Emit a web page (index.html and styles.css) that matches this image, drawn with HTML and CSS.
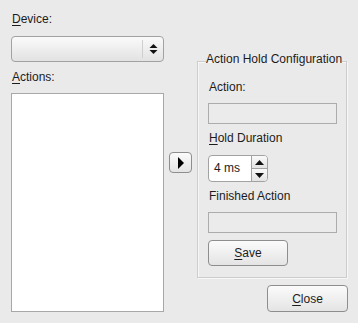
FILE: index.html
```html
<!DOCTYPE html>
<html lang="en">
<head>
    <meta charset="UTF-8">
    <title>Actions</title>
    <link rel="stylesheet" href="styles.css">
</head>
<body>
    <div class="dialog">
        <div class="left">
            <div class="label"><u>D</u>evice:</div>
            <div class="combo">
                <div class="combo-text"></div>
                <div class="combo-arrows">
                    <svg width="9" height="12" viewBox="0 0 9 12"><path d="M4.5 1 L8.5 5 L0.5 5 Z M4.5 11 L8.5 7 L0.5 7 Z" fill="#111"/></svg>
                </div>
            </div>
            <div class="label actions-label"><u>A</u>ctions:</div>
            <div class="list"></div>
        </div>

        <div class="middle">
            <button class="btn arrow-btn">
                <svg width="8" height="12" viewBox="0 0 8 12"><path d="M1 0 L7 6 L1 12 Z" fill="#000"/></svg>
            </button>
        </div>

        <div class="right">
            <fieldset class="group">
                <legend>Action Hold Configuration</legend>
                <div class="label first">Action:</div>
                <div class="entry"></div>
                <div class="label"><u>H</u>old Duration</div>
                <div class="spin">
                    <div class="spin-value">4 ms</div>
                    <div class="spin-buttons">
                        <div class="spin-btn">
                            <svg width="9" height="5" viewBox="0 0 9 5"><path d="M4.5 0 L9 5 L0 5 Z" fill="#111"/></svg>
                        </div>
                        <div class="spin-btn">
                            <svg width="9" height="5" viewBox="0 0 9 5"><path d="M0 0 L9 0 L4.5 5 Z" fill="#111"/></svg>
                        </div>
                    </div>
                </div>
                <div class="label">Finished Action</div>
                <div class="entry"></div>
                <button class="btn save-btn"><u>S</u>ave</button>
            </fieldset>
            <div class="footer">
                <button class="btn close-btn"><u>C</u>lose</button>
            </div>
        </div>
    </div>
</body>
</html>
```

FILE: styles.css
```css
body {
    margin: 0;
    background-color: #eaeaea;
    font-family: "Liberation Sans", Arial, sans-serif;
    font-size: 12px;
    color: #1c1c1c;
}

u {
    text-decoration-thickness: 1px;
    text-underline-offset: 2px;
}

.dialog {
    display: grid;
    grid-template-columns: 153px 23px 150px;
    column-gap: 5px;
    padding: 12px 0 0 11px;
}

.label {
    line-height: 14px;
    height: 14px;
    padding-left: 1px;
}

/* left column */
.combo {
    display: flex;
    height: 26px;
    margin-top: 10px;
    border: 1px solid #a2a2a2;
    border-radius: 4px;
    background: linear-gradient(#fafafa, #e2e2e2);
    box-sizing: border-box;
}

.combo-text {
    flex: 1;
}

.combo-arrows {
    width: 20px;
    border-left: 1px solid #cfcfcf;
    display: flex;
    align-items: center;
    justify-content: center;
    margin: 3px 0;
}

.actions-label {
    margin-top: 8px;
}

.list {
    margin-top: 9px;
    height: 219px;
    background: #fff;
    border: 1px solid #a8a8a8;
    box-sizing: border-box;
}

/* middle */
.middle {
    padding-top: 140px;
}

.btn {
    font-family: inherit;
    font-size: 12px;
    color: #1c1c1c;
    border: 1px solid #8e8e8e;
    border-radius: 4px;
    background: linear-gradient(#fbfbfb, #e4e4e4);
    box-sizing: border-box;
    padding: 0;
    display: flex;
    align-items: center;
    justify-content: center;
}

.arrow-btn {
    width: 23px;
    height: 21px;
}

/* right column */
.right {
    padding-top: 40px;
}

.group {
    margin: 0;
    min-width: 0;
    padding: 0 9px 11px 10px;
    width: 150px;
    box-sizing: border-box;
    border: 1px solid #cdcdcd;
    box-shadow: inset 1px 1px 0 #f7f7f7, 1px 1px 0 #f7f7f7;
}

.group legend {
    padding: 0 0 4px 0;
    margin-left: -2px;
    line-height: 14px;
    white-space: nowrap;
}

.group .first {
    margin-top: 10px;
}

.entry {
    height: 21px;
    margin: 9px 0 7px;
    border: 1px solid #acacac;
    background: #ebebeb;
    box-sizing: border-box;
}

.entry + .save-btn {
    margin-top: 7px;
}

.spin {
    display: flex;
    width: 60px;
    height: 27px;
    margin: 10px 0 7px;
    border: 1px solid #a2a2a2;
    border-radius: 4px;
    background: #fff;
    box-sizing: border-box;
    overflow: hidden;
}

.spin-value {
    flex: 1;
    padding-left: 5px;
    line-height: 25px;
}

.spin-buttons {
    width: 15px;
    display: flex;
    flex-direction: column;
    border-left: 1px solid #a2a2a2;
}

.spin-btn {
    flex: 1;
    display: flex;
    align-items: center;
    justify-content: center;
    background: linear-gradient(#fafafa, #e3e3e3);
}

.spin-btn + .spin-btn {
    border-top: 1px solid #a2a2a2;
}

.save-btn {
    width: 80px;
    height: 26px;
}

.footer {
    display: flex;
    justify-content: flex-end;
    margin-top: 7px;
    width: 151px;
}

.close-btn {
    width: 81px;
    height: 27px;
}
```
